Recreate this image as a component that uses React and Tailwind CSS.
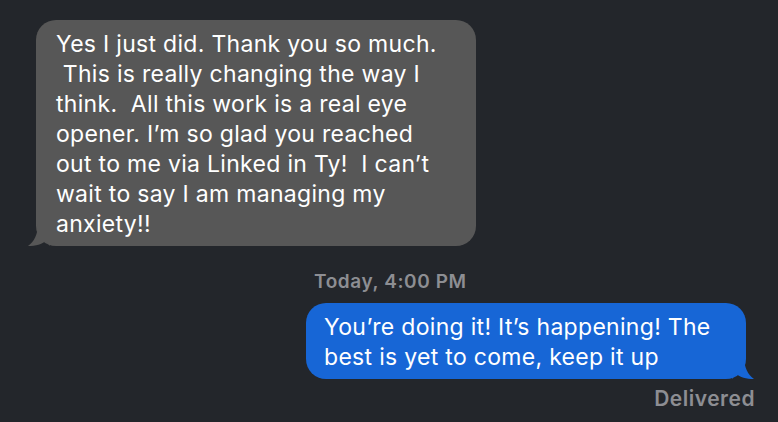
import React from 'react'

const incoming = [
    'Yes I just did. Thank you so much.',
    ' This is really changing the way I',
    'think.  All this work is a real eye',
    'opener. I\u2019m so glad you reached',
    'out to me via Linked in Ty!  I can\u2019t',
    'wait to say I am managing my',
    'anxiety!!'
]

const outgoing = [
    'You\u2019re doing it! It\u2019s happening! The',
    'best is yet to come, keep it up'
]

function Bubble({ lines, side }) {
    const isMe = side === 'right'
    const bg = isMe ? 'bg-[#1766d6]' : 'bg-[#575757]'
    const fill = isMe ? '#1766d6' : '#575757'

    return (
        <div className={`relative ${bg} rounded-[20px] w-[440px] pt-[9px] pb-[7px] ${isMe ? 'pl-[18px] pr-3' : 'pl-[20px] pr-3'}`}>
            {lines.map((line, i) => (
                <div key={i} className="whitespace-pre text-white text-[23px] leading-[30px] tracking-[0.3px]">
                    {line}
                </div>
            ))}
            {isMe ? (
                <svg className="absolute -right-[8px] bottom-0" width="22" height="22" viewBox="0 0 22 22">
                    <path d="M0 0 L12 0 C12 10 16 18 22 22 C14 22 8 20 4 17 L0 22 Z" fill={fill} />
                </svg>
            ) : (
                <svg className="absolute -left-[8px] bottom-0" width="22" height="22" viewBox="0 0 22 22">
                    <path d="M22 0 L10 0 C10 10 6 18 0 22 C8 22 14 20 18 17 L22 22 Z" fill={fill} />
                </svg>
            )}
        </div>
    )
}

export default function App() {
    return (
        <div className="w-[778px] h-[422px] overflow-hidden bg-[#23262b] font-['Inter',sans-serif] flex flex-col">
            <div className="pt-[20px] pl-[36px]">
                <Bubble lines={incoming} side="left" />
            </div>
            <div className="mt-[25px] pl-[314px] text-[19px] leading-[22px] font-semibold tracking-[0.6px] text-[#8d8e93]">
                Today, 4:00 PM
            </div>
            <div className="mt-[10px] pl-[306px]">
                <Bubble lines={outgoing} side="right" />
            </div>
            <div className="mt-[8px] pr-[23px] text-right text-[21px] leading-[24px] font-semibold tracking-[0.5px] text-[#8d8e93]">
                Delivered
            </div>
        </div>
    )
}
